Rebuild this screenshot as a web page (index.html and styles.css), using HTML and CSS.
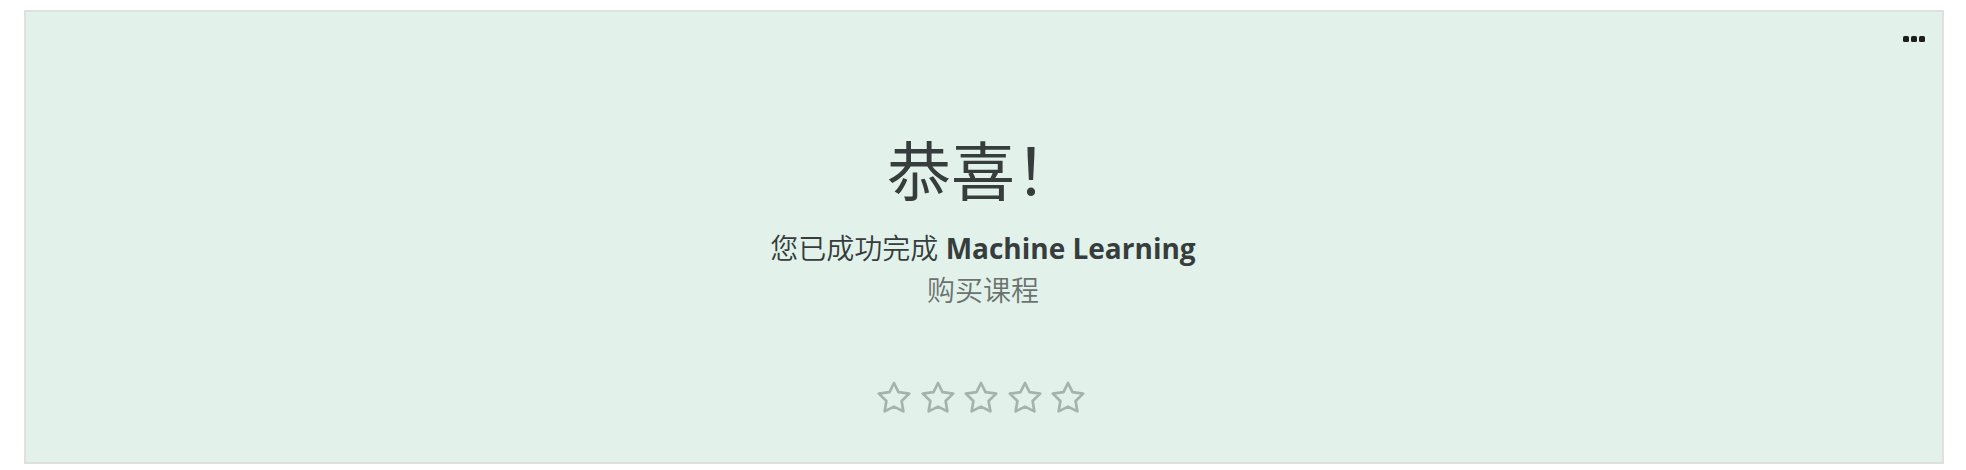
FILE: index.html
```html
<!DOCTYPE html>
<html lang="zh-CN">
<head>
<meta charset="utf-8">
<title>Machine Learning</title>
<link rel="stylesheet" href="styles.css">
</head>
<body>
<svg class="sprite" aria-hidden="true">
  <symbol id="star" viewBox="0 0 34 32">
    <path fill="none" stroke="currentColor" stroke-width="2.7" stroke-linejoin="round" d="M17 2 21.5 11.2 32.2 12.6 24.6 20 26.4 30.4 17 25.6 7.6 30.4 9.4 20 1.8 12.6 12.5 11.2Z"/>
  </symbol>
</svg>
<main class="card">
  <header class="toolbar">
    <button class="menu" type="button" aria-label="更多">
      <svg class="dots" viewBox="0 0 22 6" aria-hidden="true">
        <rect width="6" height="6" rx="1.5"/>
        <rect x="8" width="6" height="6" rx="1.5"/>
        <rect x="16" width="6" height="6" rx="1.5"/>
      </svg>
    </button>
  </header>
  <h1 class="title">恭喜！</h1>
  <p class="message">您已成功完成 <strong>Machine Learning</strong></p>
  <p class="message muted">购买课程</p>
  <div class="rating" role="group" aria-label="评分">
    <button class="star" type="button" aria-label="1 星"><svg class="star-icon"><use href="#star"/></svg></button>
    <button class="star" type="button" aria-label="2 星"><svg class="star-icon"><use href="#star"/></svg></button>
    <button class="star" type="button" aria-label="3 星"><svg class="star-icon"><use href="#star"/></svg></button>
    <button class="star" type="button" aria-label="4 星"><svg class="star-icon"><use href="#star"/></svg></button>
    <button class="star" type="button" aria-label="5 星"><svg class="star-icon"><use href="#star"/></svg></button>
  </div>
</main>
</body>
</html>
```
FILE: styles.css
```css
* {
  box-sizing: border-box;
}

body {
  margin: 0;
  padding: 10px 22px 6px 24px;
  background: #fff;
  color: #363d3c;
  font-family: "Open Sans", "Noto Sans CJK SC", sans-serif;
}

.sprite {
  display: none;
}

.card {
  display: flex;
  flex-direction: column;
  align-items: center;
  padding: 16px 17px 49px 15px;
  border: 2px solid #dfe1e0;
  background: #e2f2eb;
}

.toolbar {
  display: flex;
  justify-content: flex-end;
  width: 100%;
}

button {
  display: block;
  padding: 0;
  border: 0;
  background: none;
  cursor: pointer;
}

.menu {
  height: 22px;
}

.dots {
  display: block;
  width: 22px;
  height: 6px;
  fill: #1c1f1e;
}

.title {
  margin: 73px 0 8px;
  font-size: 64px;
  font-weight: 400;
  line-height: 96px;
}

.message {
  margin: 0;
  font-size: 28px;
  font-weight: 350;
  line-height: 42px;
}

.message strong {
  font-weight: 700;
}

.muted {
  color: #6b736f;
}

.rating {
  display: flex;
  justify-content: space-between;
  width: 208px;
  margin: 70px 4px 0 0;
}

.star {
  color: #a6b3ad;
}

.star-icon {
  display: block;
  width: 34px;
  height: 32px;
}
```
